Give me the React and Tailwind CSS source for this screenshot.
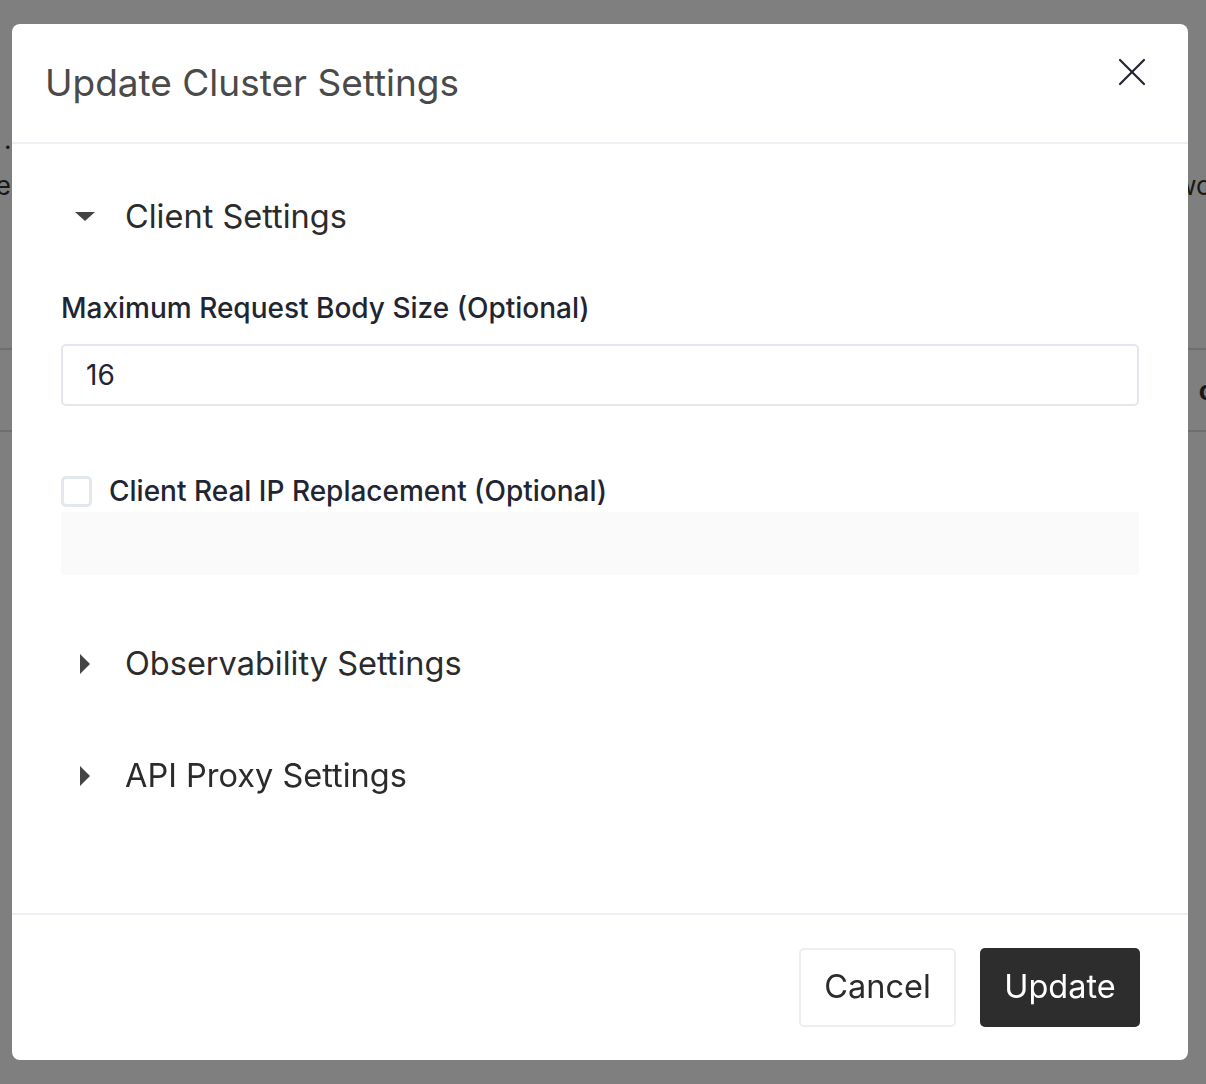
import { X } from "lucide-react";

function Caret({ open }) {
  return open ? (
    <svg width="20" height="10" viewBox="0 0 20 10" className="text-[#444]">
      <path d="M0 0 L20 0 L10 9 Z" fill="currentColor" />
    </svg>
  ) : (
    <svg width="10" height="20" viewBox="0 0 10 20" className="text-[#444]">
      <path d="M0 0 L10 10 L0 20 Z" fill="currentColor" />
    </svg>
  );
}

function Section({ title, open, children }) {
  return (
    <div>
      <div className="flex items-center h-[40px]">
        <div className="w-[48px] mr-[16px] flex justify-center">
          <Caret open={open} />
        </div>
        <span className="text-[32.5px] text-[#2b2b2b] font-normal">{title}</span>
      </div>
      {children}
    </div>
  );
}

export default function App() {
  return (
    <div className="relative w-[1206px] h-[1084px] overflow-hidden bg-white font-['Inter',sans-serif]">
      {/* page behind the dialog */}
      <div className="pt-[120px] text-[26px] text-[#333]">
        <div className="flex justify-between px-[4px]">
          <span>.</span>
        </div>
        <div className="flex justify-between -ml-[50px] -mr-[30px] mt-[7px]">
          <span>Type</span>
          <span>Network</span>
        </div>
        <div className="mt-[143px] border-t-2 border-[#ddd] h-[82px] flex justify-end items-center">
          <span className="-mr-[8px] font-bold">c</span>
        </div>
        <div className="border-t-2 border-[#ddd]" />
      </div>

      {/* overlay */}
      <div className="fixed inset-0 bg-black/50 flex items-start pl-[12px] pt-[24px]">
        <div className="w-[1176px] h-[1036px] bg-white rounded-[8px] flex flex-col">
          {/* header */}
          <div className="h-[120px] border-b-2 border-[#edf0f4] flex items-start justify-between pl-[33px] pr-[32px] shrink-0">
            <h2 className="mt-[35px] text-[37px] leading-[48px] text-[#4a4a4a] font-normal">
              Update Cluster Settings
            </h2>
            <X className="mt-[24px] text-[#1f2430]" size={48} strokeWidth={1.1} />
          </div>

          {/* body */}
          <div className="flex-1 px-[49px] pt-[53px]">
            <Section title="Client Settings" open>
              <div className="pt-[53px]">
                <label className="block text-[28px] leading-[36px] font-medium text-[#1f2532]">
                  Maximum Request Body Size (Optional)
                </label>
                <div className="mt-[18px] h-[62px] border-2 border-[#e3e7ee] rounded-[5px] flex items-center px-[23px] text-[28px] text-[#1f2532]">
                  16
                </div>
                <div className="mt-[67px] flex items-center gap-[17px]">
                  <div className="w-[31px] h-[31px] border-[3px] border-[#e3e7ee] rounded-[5px]" />
                  <span className="text-[28px] leading-[36px] font-medium text-[#1f2532]">
                    Client Real IP Replacement (Optional)
                  </span>
                </div>
                <div className="mt-[3px] h-[63px] bg-[#fafafa]" />
              </div>
            </Section>
            <div className="mt-[69px]">
              <Section title="Observability Settings" />
            </div>
            <div className="mt-[72px]">
              <Section title="API Proxy Settings" />
            </div>
          </div>

          {/* footer */}
          <div className="h-[147px] border-t-2 border-[#edf0f4] flex items-center justify-end gap-[24px] pr-[48px] shrink-0">
            <button className="h-[79px] w-[157px] border-2 border-[#eeeeee] rounded-[5px] bg-white text-[32.5px] text-[#2b2b2b]">
              Cancel
            </button>
            <button className="h-[79px] w-[160px] rounded-[5px] bg-[#2d2d2d] text-[32.5px] text-white">
              Update
            </button>
          </div>
        </div>
      </div>
    </div>
  );
}
